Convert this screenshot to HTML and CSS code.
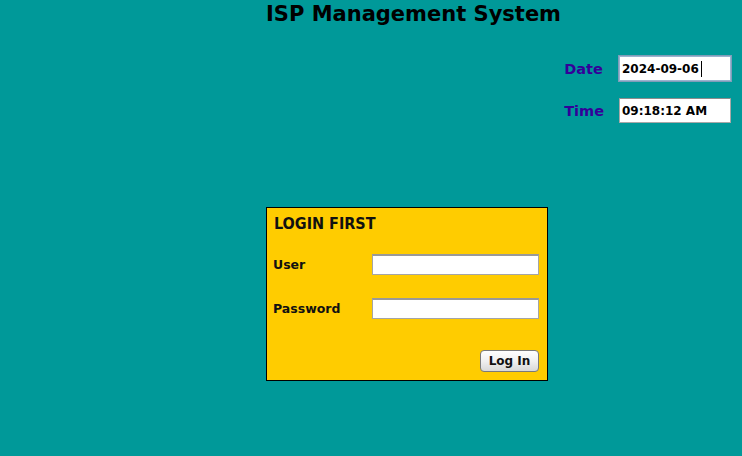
FILE: index.html
```html
<!DOCTYPE html>
<html>
<head>
<meta charset="utf-8">
<title>ISP Management System</title>
<link rel="stylesheet" href="styles.css">
</head>
<body>
<div class="page">
  <h1 class="title">ISP Management System</h1>
  <div class="clock">
    <label class="clock-label" for="date">Date</label>
    <div class="clock-field">
      <input class="clock-input focused" id="date" type="text" value="2024-09-06">
      <span class="caret"></span>
    </div>
    <label class="clock-label" for="time">Time</label>
    <div class="clock-field">
      <input class="clock-input" id="time" type="text" value="09:18:12 AM">
    </div>
  </div>
  <form class="login">
    <div class="login-title">LOGIN FIRST</div>
    <div class="login-grid">
      <label class="login-label" for="user">User</label>
      <input class="login-input" id="user" type="text">
      <label class="login-label" for="pass">Password</label>
      <input class="login-input" id="pass" type="password">
    </div>
    <div class="login-actions">
      <button class="login-button" type="button">Log In</button>
    </div>
  </form>
</div>
</body>
</html>
```
FILE: styles.css
```css
html, body {
  margin: 0;
  padding: 0;
  background: #009999;
}
body {
  font-family: "DejaVu Sans", Verdana, sans-serif;
  width: 742px;
  height: 456px;
  overflow: hidden;
}
.page {
  display: flex;
  flex-direction: column;
}
.title {
  margin: 1px 0 0 266px;
  font-size: 21px;
  line-height: 26px;
  font-weight: bold;
  color: #000;
}
.clock {
  align-self: flex-end;
  margin: 29px 11px 0 0;
  display: grid;
  grid-template-columns: auto 112px;
  column-gap: 15px;
  row-gap: 17px;
  align-items: center;
}
.clock-label {
  font-size: 14.5px;
  font-weight: bold;
  color: #330099;
}
.clock-field {
  position: relative;
  height: 25px;
}
.clock-input {
  box-sizing: border-box;
  width: 112px;
  height: 25px;
  margin: 0;
  padding: 0 2px;
  border: 1px solid #a8a8a8;
  border-top-color: #8c8c8c;
  background: #fff;
  font-family: "DejaVu Sans", Verdana, sans-serif;
  font-size: 12px;
  font-weight: bold;
  color: #000;
}
.clock-input.focused {
  outline: 1px solid #7f9db9;
  border-color: #9ab3cf;
}
.caret {
  position: absolute;
  left: 82px;
  top: 5px;
  width: 1px;
  height: 16px;
  background: #000;
}
.login {
  box-sizing: border-box;
  margin: 84px 0 0 266px;
  width: 282px;
  height: 174px;
  border: 1px solid #000;
  background: #ffcc00;
  padding: 6px 8px 8px 6px;
  display: flex;
  flex-direction: column;
}
.login-title {
  font-family: "DejaVu Sans Condensed", "DejaVu Sans", sans-serif;
  font-size: 16px;
  font-weight: bold;
  line-height: 20px;
  padding-left: 1px;
  color: #111;
}
.login-grid {
  margin-top: 20px;
  display: grid;
  grid-template-columns: 99px 167px;
  row-gap: 23px;
  align-items: center;
}
.login-label {
  font-size: 12.5px;
  font-weight: bold;
  color: #111;
}
.login-input {
  box-sizing: border-box;
  width: 167px;
  height: 21px;
  margin: 0;
  border: 1px solid #a5a5a5;
  border-top: 2px solid #999;
  background: #fff;
}
.login-actions {
  margin-top: 31px;
  display: flex;
  justify-content: flex-end;
}
.login-button {
  box-sizing: border-box;
  width: 59px;
  height: 22px;
  padding: 0;
  border: 1px solid #7a7a7a;
  border-radius: 4px;
  background: linear-gradient(#ffffff, #f0f0f0 50%, #d8d8d8);
  font-family: "DejaVu Sans", Verdana, sans-serif;
  font-size: 12px;
  font-weight: bold;
  color: #111;
}
```
